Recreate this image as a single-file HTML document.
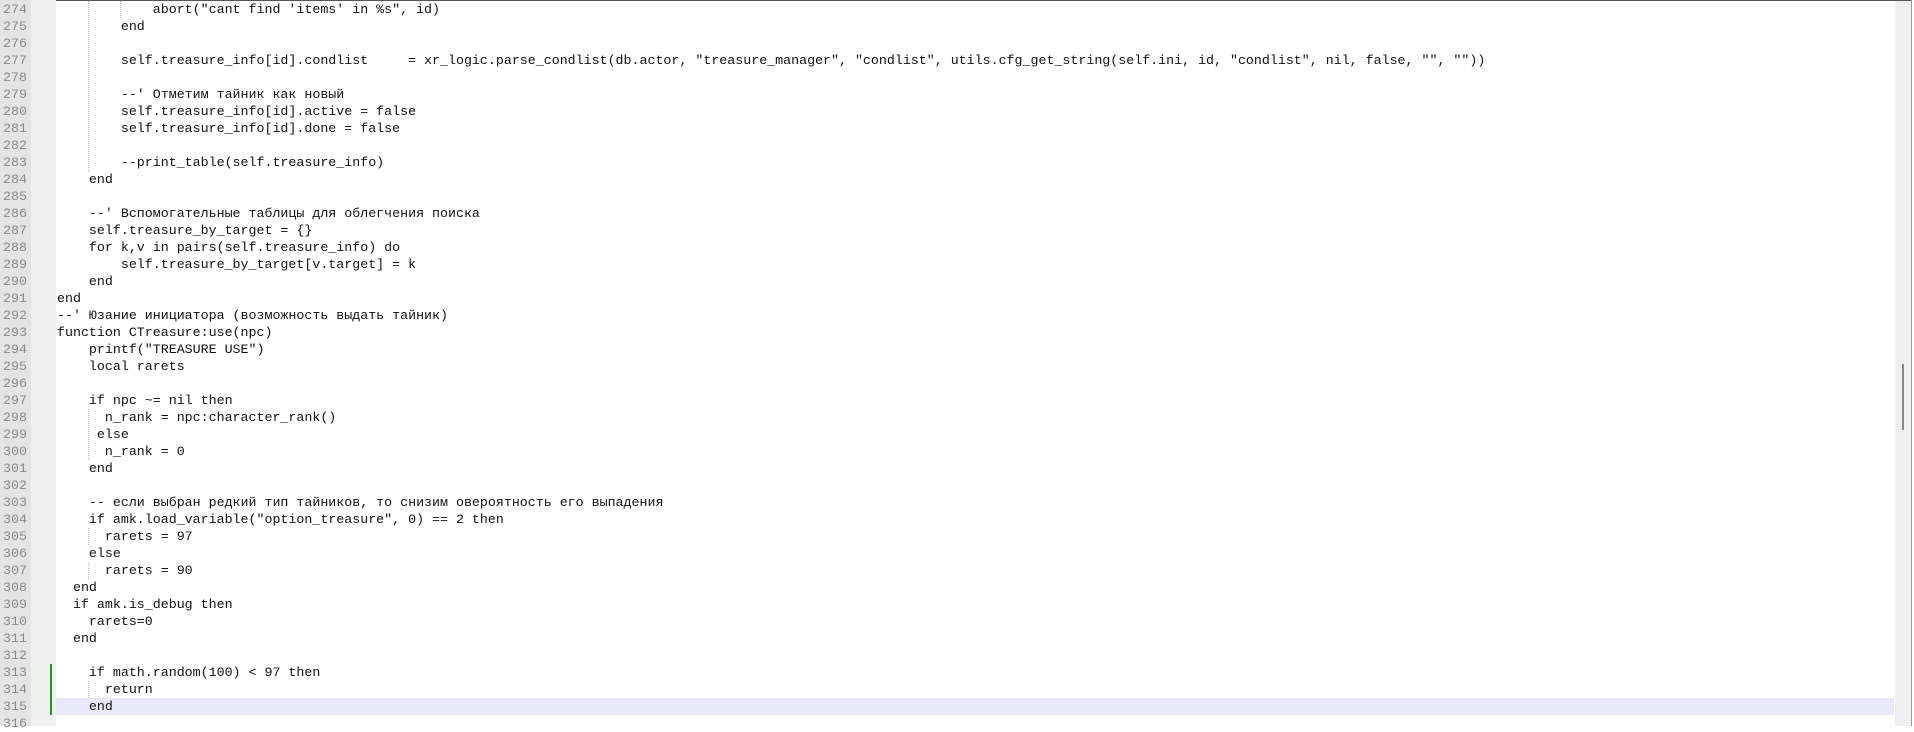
<!DOCTYPE html>
<html><head><meta charset="utf-8"><style>
html,body{margin:0;padding:0;width:1914px;height:726px;overflow:hidden;background:#fff;}
#top{position:absolute;left:0;top:0;width:1914px;height:1px;background:#555;}
#num{position:absolute;left:0;top:0;width:31px;height:726px;background:#e4e4e4;}
#fold{position:absolute;left:31px;top:0;width:25px;height:726px;background:#f0f0f0;}
#sb{position:absolute;left:1895px;top:1px;width:16px;height:725px;background:#efefef;}
#sbr{position:absolute;left:1911px;top:0;width:3px;height:726px;background:#fff;border-left:1px solid #999;}
#thumb{position:absolute;left:1902px;top:364px;width:2px;height:66px;background:#888;}
#hl{position:absolute;left:56px;top:698px;width:1838px;height:17px;background:#e8e8fa;}
.g{position:absolute;left:50px;width:2px;background:#1a9e1a;}
.row{position:absolute;left:0;height:17px;line-height:17px;white-space:pre;font-family:"Liberation Mono","Noto Sans CJK SC",monospace;font-size:13.3px;color:#111;}
.n{position:absolute;left:3px;width:26px;color:#8a8a8a;font-family:"Liberation Mono",monospace;font-size:13.3px;}
.c{position:absolute;left:57px;}
.d{position:absolute;width:0;border-left:1px dotted #bbb;}
</style></head><body>
<div id="top"></div><div id="num"></div><div id="fold"></div>
<div id="hl"></div>
<div id="sb"></div><div id="sbr"></div><div id="thumb"></div>
<div class="g" style="top:664px;height:51px"></div>
<div class="d" style="left:88px;top:1px;height:171px"></div>
<div class="d" style="left:120px;top:1px;height:17px"></div>
<div class="d" style="left:88px;top:409px;height:51px"></div>
<div class="d" style="left:88px;top:528px;height:17px"></div>
<div class="d" style="left:88px;top:562px;height:17px"></div>
<div class="d" style="left:88px;top:681px;height:17px"></div>
<div id="code"></div>
<script>
var L=[
"            abort(\"cant find 'items' in %s\", id)",
"        end",
"",
"        self.treasure_info[id].condlist     = xr_logic.parse_condlist(db.actor, \"treasure_manager\", \"condlist\", utils.cfg_get_string(self.ini, id, \"condlist\", nil, false, \"\", \"\"))",
"",
"        --' Отметим тайник как новый",
"        self.treasure_info[id].active = false",
"        self.treasure_info[id].done = false",
"",
"        --print_table(self.treasure_info)",
"    end",
"",
"    --' Вспомогательные таблицы для облегчения поиска",
"    self.treasure_by_target = {}",
"    for k,v in pairs(self.treasure_info) do",
"        self.treasure_by_target[v.target] = k",
"    end",
"end",
"--' Юзание инициатора (возможность выдать тайник)",
"function CTreasure:use(npc)",
"    printf(\"TREASURE USE\")",
"    local rarets",
"",
"    if npc ~= nil then",
"      n_rank = npc:character_rank()",
"     else",
"      n_rank = 0",
"    end",
"",
"    -- если выбран редкий тип тайников, то снизим овероятность его выпадения",
"    if amk.load_variable(\"option_treasure\", 0) == 2 then",
"      rarets = 97",
"    else",
"      rarets = 90",
"  end",
"  if amk.is_debug then",
"    rarets=0",
"  end",
"",
"    if math.random(100) < 97 then",
"      return",
"    end",
""];
var h="";
for(var i=0;i<L.length;i++){var t=1+i*17;
h+='<div class="row" style="top:'+t+'px;width:1890px"><span class="n">'+(274+i)+'</span><span class="c">'+L[i].replace(/&/g,"&amp;").replace(/</g,"&lt;")+'</span></div>';}
document.getElementById("code").innerHTML=h;
</script>
</body></html>
